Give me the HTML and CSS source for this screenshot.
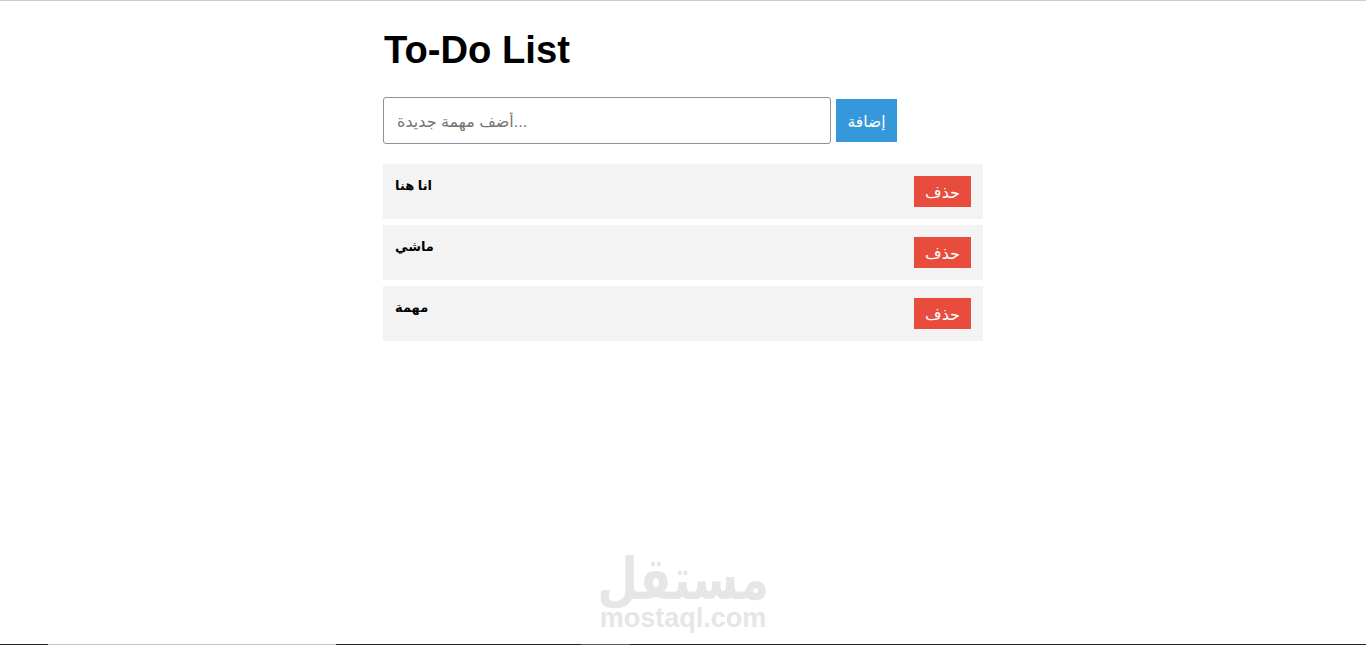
FILE: index.html
```html
<!DOCTYPE html>
<html lang="ar">
<head>
  <meta charset="UTF-8" />
  <title>To-Do List</title>
  <link rel="stylesheet" href="styles.css">
</head>
<body>
  <div class="container">
    <h1>To-Do List</h1>
    <div class="add-row">
      <input type="text" class="task-input" placeholder="أضف مهمة جديدة..." />
      <button class="add-btn">إضافة</button>
    </div>
    <ul class="task-list">
      <li class="task">
        <span class="task-name">انا هنا</span>
        <button class="delete-btn">حذف</button>
      </li>
      <li class="task">
        <span class="task-name">ماشي</span>
        <button class="delete-btn">حذف</button>
      </li>
      <li class="task">
        <span class="task-name">مهمة</span>
        <button class="delete-btn">حذف</button>
      </li>
    </ul>
  </div>

  <!-- watermark over the page -->
  <div class="watermark">
    <div class="watermark-ar">مستقل</div>
    <div class="watermark-en">mostaql.com</div>
  </div>

  <div class="edge-bar">
    <span class="edge dark w48"></span>
    <span class="edge light w288"></span>
    <span class="edge dark w245"></span>
    <span class="edge gray w49"></span>
    <span class="edge dark grow"></span>
  </div>
</body>
</html>
```

FILE: styles.css
```css
* {
  margin: 0;
  padding: 0;
  box-sizing: border-box;
}

body {
  font-family: "Liberation Sans", "DejaVu Sans", sans-serif;
  background-color: #ffffff;
  color: #000000;
  height: 100vh;
  border-top: 1px solid #cccccc;
  display: flex;
  flex-direction: column;
  overflow: hidden;
}

.container {
  width: 600px;
  margin-left: 383px;
  flex-grow: 1;
}

h1 {
  font-size: 38.2px;
  line-height: 44px;
  margin: 27px 0 25px 1px;
}

.add-row {
  display: flex;
  align-items: center;
  gap: 5px;
  margin-bottom: 20px;
}

.task-input {
  width: 448px;
  height: 47px;
  padding: 2px 13px 0;
  font-family: inherit;
  font-size: 16px;
  border: 1px solid #8f8f9d;
  border-radius: 3px;
}

.add-btn {
  width: 61px;
  height: 43px;
  padding-top: 2px;
  font-family: inherit;
  font-size: 15.5px;
  color: #ffffff;
  background-color: #3498db;
  border: none;
}

.task-list {
  list-style: none;
}

.task {
  height: 55px;
  margin-bottom: 6px;
  padding: 12px;
  background-color: #f3f3f3;
  display: flex;
  justify-content: space-between;
  align-items: flex-start;
}

.task-name {
  font-size: 13px;
  font-weight: bold;
  line-height: 19px;
}

.delete-btn {
  width: 57px;
  height: 31px;
  padding-top: 2px;
  font-family: inherit;
  font-size: 16px;
  color: #ffffff;
  background-color: #e74c3c;
  border: none;
}

.watermark {
  position: absolute;
  left: 600px;
  top: 552px;
  width: 166px;
  display: flex;
  flex-direction: column;
  align-items: center;
  color: #e6e6e6;
  font-weight: bold;
  white-space: nowrap;
}

.watermark-ar {
  font-size: 58px;
  line-height: 53px;
  transform: scaleX(0.81);
}

.watermark-en {
  font-size: 27px;
  line-height: 26px;
}

.edge-bar {
  display: flex;
  height: 1px;
}

.edge.dark { background-color: #1c2327; }
.edge.light { background-color: #c9c2c4; }
.edge.gray { background-color: #5a5f62; }
.w48 { width: 48px; }
.w288 { width: 288px; }
.w245 { width: 245px; }
.w49 { width: 49px; }
.grow { flex-grow: 1; }
```
